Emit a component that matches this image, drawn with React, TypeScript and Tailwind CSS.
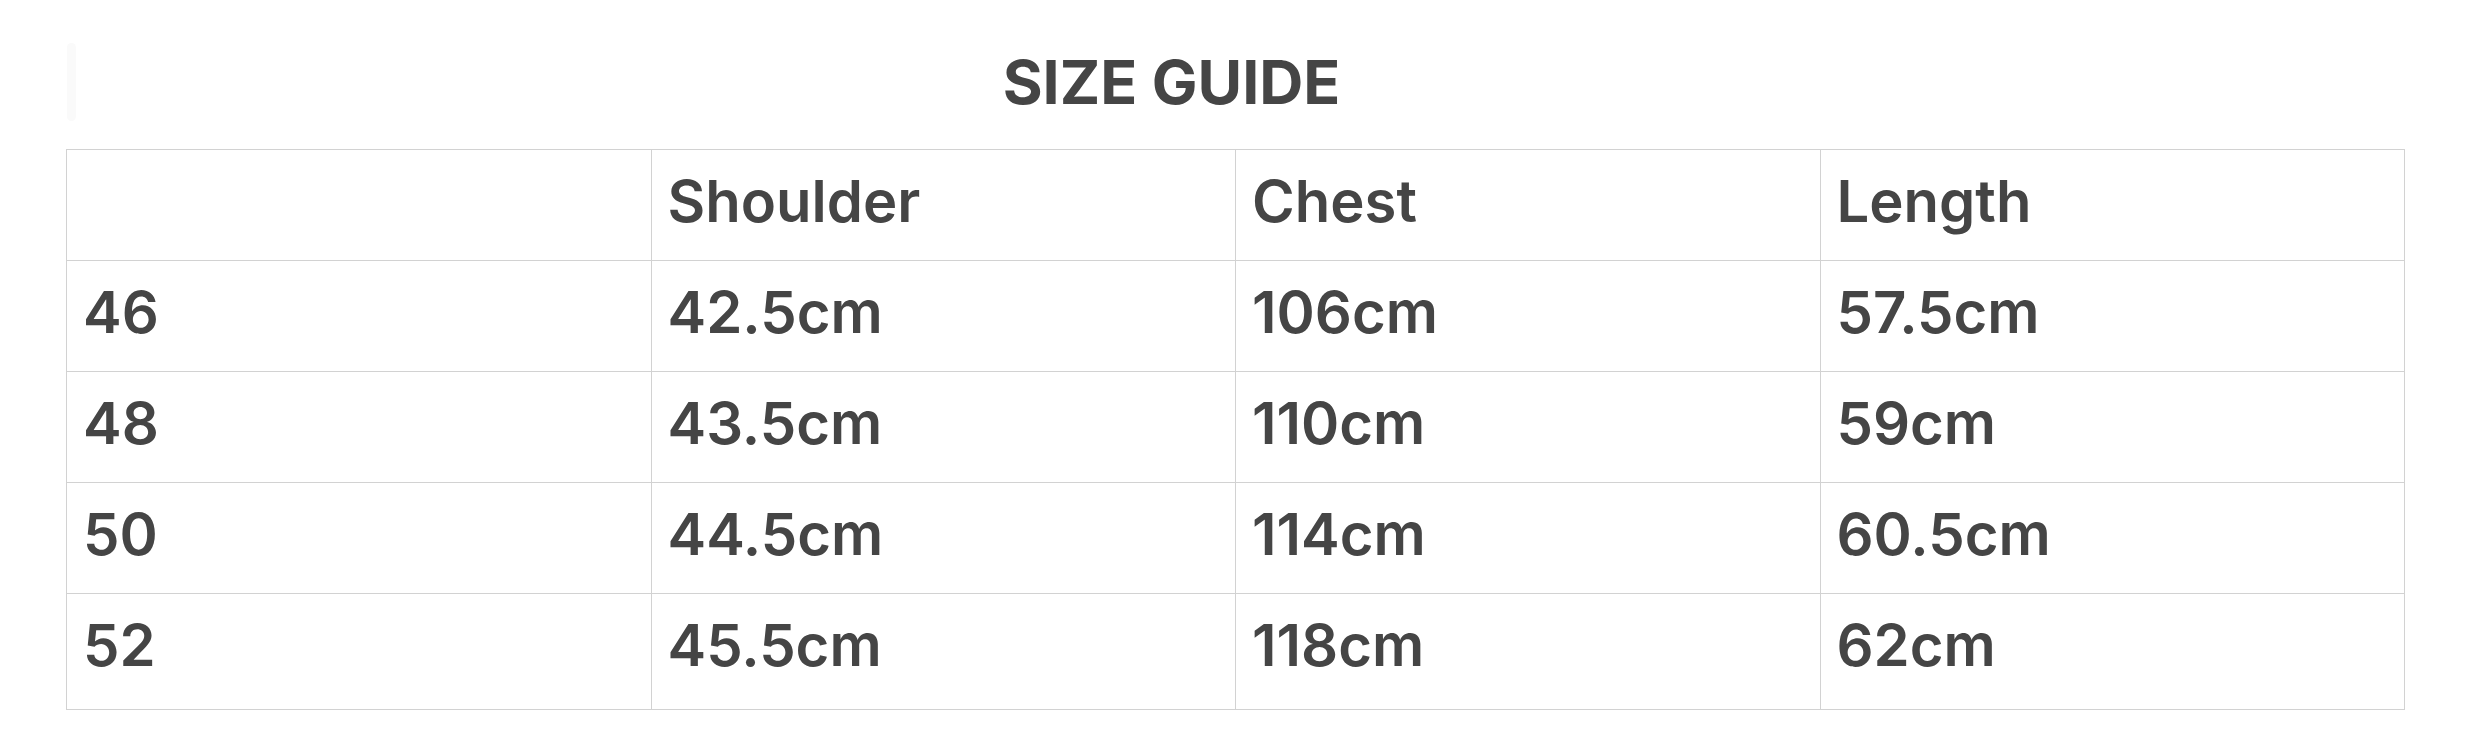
const rows = [
  ["46", "42.5cm", "106cm", "57.5cm"],
  ["48", "43.5cm", "110cm", "59cm"],
  ["50", "44.5cm", "114cm", "60.5cm"],
  ["52", "45.5cm", "118cm", "62cm"],
];

const headers = ["", "Shoulder", "Chest", "Length"];

export default function App() {
  return (
    <div className="min-h-[753px] w-[2481px] bg-white font-['Inter',sans-serif] text-[#454545]">
      <div className="pl-[66px] pr-[76px]">
        <div className="relative flex h-[149px] justify-center pr-[128px] pt-[46px]">
          <div className="absolute left-[1px] top-[43px] h-[78px] w-[9px] rounded-full bg-[#fafafa]" />
          <h1 className="text-[61px] font-bold leading-[73px]">SIZE GUIDE</h1>
        </div>
        <table className="w-full table-fixed border-collapse">
          <thead>
            <tr>
              {headers.map((h, i) => (
                <th
                  key={i}
                  className="h-[111px] border border-[#d2d2d2] pl-[16px] pt-[15px] text-left align-top text-[58px] font-semibold leading-[73px]"
                >
                  {h}
                </th>
              ))}
            </tr>
          </thead>
          <tbody>
            {rows.map((row, r) => (
              <tr key={r}>
                {row.map((cell, c) => (
                  <td
                    key={c}
                    className={`border border-[#d2d2d2] pl-[16px] pt-[15px] align-top text-[58px] font-semibold leading-[73px] ${
                      r === rows.length - 1 ? "h-[116px]" : "h-[111px]"
                    }`}
                  >
                    {cell}
                  </td>
                ))}
              </tr>
            ))}
          </tbody>
        </table>
      </div>
    </div>
  );
}
